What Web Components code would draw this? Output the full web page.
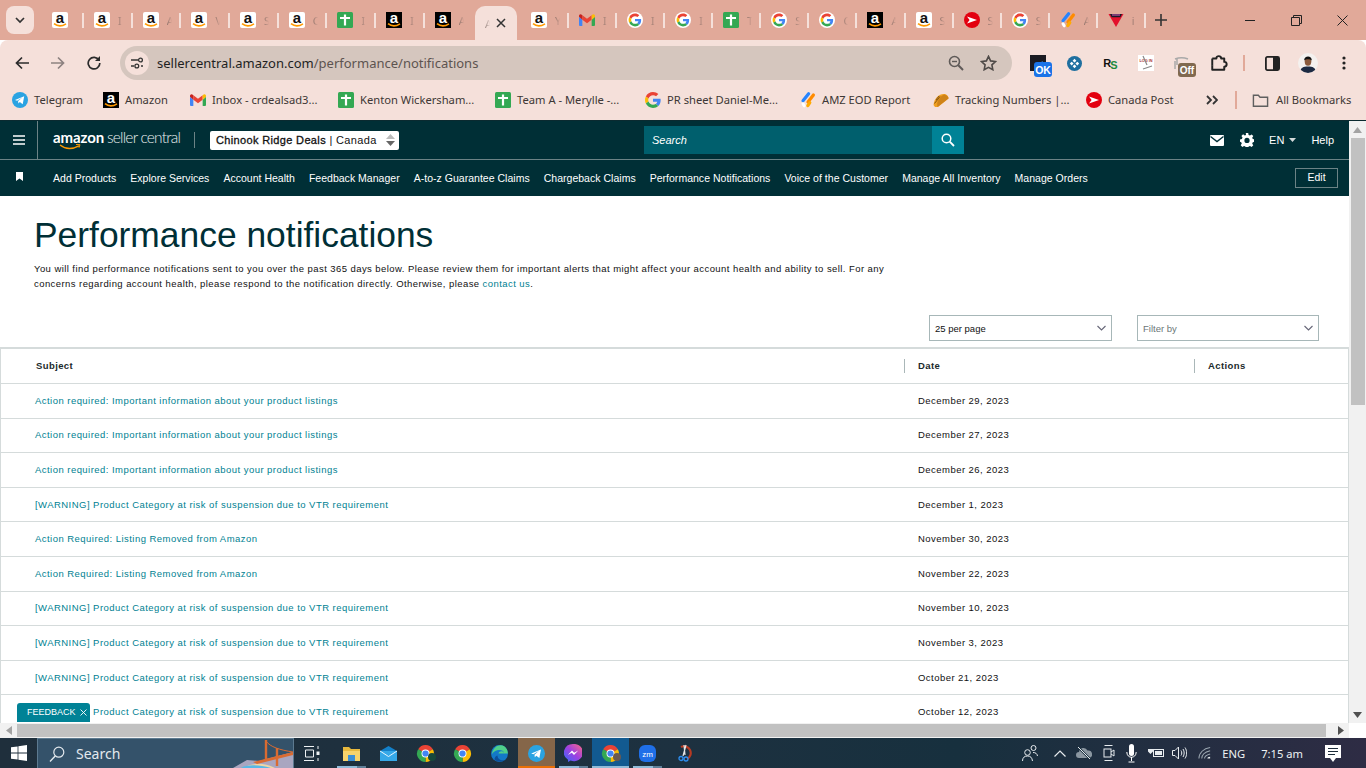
<!DOCTYPE html>
<html>
<head>
<meta charset="utf-8">
<title>Performance notifications</title>
<style>
  html, body { margin: 0; padding: 0; height: 100%; overflow: hidden; }
  body { width: 1366px; height: 768px; display: flex; flex-direction: column; font-family: "Liberation Sans", Arial, sans-serif; }
</style>
</head>
<body>
<chrome-tabs></chrome-tabs>
<chrome-toolbar></chrome-toolbar>
<chrome-bookmarks></chrome-bookmarks>
<seller-window>
  <seller-header></seller-header>
  <seller-nav></seller-nav>
  <perf-page></perf-page>
</seller-window>
<win-taskbar></win-taskbar>

<script>
const chromeSvg = `<svg viewBox="0 0 24 24" width="100%" height="100%"><path fill="#ea4335" d="M12 12L1.6 6A12 12 0 0 1 22.4 6Z"/><path fill="#fbbc05" d="M12 12L22.4 6A12 12 0 0 1 12 24Z"/><path fill="#34a853" d="M12 12L12 24A12 12 0 0 1 1.6 6Z"/><circle cx="12" cy="12" r="5.6" fill="#fff"/><circle cx="12" cy="12" r="4.4" fill="#4285f4"/></svg>`;

const googleG = `<path fill="#EA4335" d="M24 9.5c3.54 0 6.71 1.22 9.21 3.6l6.85-6.85C35.9 2.38 30.47 0 24 0 14.62 0 6.51 5.38 2.56 13.22l7.98 6.19C12.43 13.72 17.74 9.5 24 9.5z"/><path fill="#4285F4" d="M46.98 24.55c0-1.57-.15-3.09-.38-4.55H24v9.02h12.94c-.58 2.96-2.26 5.48-4.78 7.18l7.73 6c4.51-4.18 7.09-10.36 7.09-17.65z"/><path fill="#FBBC05" d="M10.53 28.59c-.48-1.45-.76-2.99-.76-4.59s.27-3.14.76-4.59l-7.98-6.19C.92 16.46 0 20.12 0 24c0 3.88.92 7.54 2.56 10.78l7.97-6.19z"/><path fill="#34A853" d="M24 48c6.48 0 11.93-2.13 15.89-5.81l-7.73-6c-2.15 1.45-4.92 2.3-8.16 2.3-6.26 0-11.57-4.22-13.47-9.91l-7.98 6.19C6.51 42.62 14.62 48 24 48z"/>`;

const icons = {
  amz: `<svg viewBox="0 0 16 16"><rect width="16" height="16" rx="2" fill="#fff"/><text x="8" y="10.6" text-anchor="middle" font-family="Liberation Sans" font-weight="700" font-size="15" fill="#111">a</text><path d="M2 11.6c3.500 2.800 8 2.800 12 .2" fill="none" stroke="#f90" stroke-width="1.6"/></svg>`,
  amzb: `<svg viewBox="0 0 16 16"><rect width="16" height="16" fill="#000"/><text x="8" y="10.6" text-anchor="middle" font-family="Liberation Sans" font-weight="700" font-size="15" fill="#fff">a</text><path d="M2 11.6c3.500 2.800 8 2.800 12 .2" fill="none" stroke="#f90" stroke-width="1.6"/></svg>`,
  sheet: `<svg viewBox="0 0 16 16"><rect width="16" height="16" rx="1.500" fill="#34a853"/><path d="M8 2.500v11M3 6h10" stroke="#fff" stroke-width="2.200"/></svg>`,
  g: `<svg viewBox="0 0 48 48">${googleG}</svg>`,
  gw: `<svg viewBox="-6 -6 60 60"><circle cx="24" cy="24" r="30" fill="#fff"/>${googleG}</svg>`,
  gmail: `<svg viewBox="0 0 24 24"><g transform="translate(0 3)"><path fill="#4285f4" d="M0 4v12.5A1.5 1.5 0 0 0 1.5 18H5V8.5z"/><path fill="#34a853" d="M19 18h3.5a1.5 1.5 0 0 0 1.5-1.5V4l-5 4.5z"/><path fill="#ea4335" d="M5 8.5V2l7 5.2L19 2v6.5l-7 5.2z"/><path fill="#fbbc05" d="M19 2v6.5L24 4V2.5A2.2 2.2 0 0 0 20.5.8z"/><path fill="#c5221f" d="M0 4l5 4.5V2L3.5.8A2.2 2.2 0 0 0 0 2.5z"/></g></svg>`,
  cp: `<svg viewBox="0 0 16 16"><circle cx="8" cy="8" r="8" fill="#e3000f"/><path d="M3 4.600l10 3.400-10 3.400 2.600-3.400z" fill="#fff"/></svg>`,
  jira: `<svg viewBox="0 0 16 16"><path d="M8.600 1.800L3 8.800" stroke="#2684ff" stroke-width="3.200" stroke-linecap="round" fill="none"/><path d="M13.400 3L8 10" stroke="#ff8b00" stroke-width="3.200" stroke-linecap="round" fill="none"/><path d="M9.800 10.600L7.800 13.600" stroke="#ffab00" stroke-width="3.200" stroke-linecap="round" fill="none"/><path d="M3 11.800l1.200 2" stroke="#fff" stroke-width="3" stroke-linecap="round" fill="none"/></svg>`,
  taco: `<svg viewBox="0 0 16 16"><path d="M.5 13C1 6.500 6 2 10.500 2 13.500 2 15.500 4 15.500 6.500L5 15H2z" fill="#f0a020"/><path d="M4.500 15C3 10 6.500 4.500 11.500 2.600 14 3.400 15.500 5 15.500 6.500z" fill="#cf8318"/><path d="M3 8l3-4M1.500 11.500L7 4.500" stroke="#7b4d12" stroke-width=".9"/></svg>`,
  telegram: `<svg viewBox="0 0 16 16"><circle cx="8" cy="8" r="8" fill="#2aa3e2"/><path d="M3 8l9.200-3.800-1.500 8-2.900-2.100-1.400 1.400-.3-2.400 4.300-3.600-5.300 3.300z" fill="#fff"/></svg>`,
  tri: `<svg viewBox="0 0 16 16"><path d="M.5 2h15L8 15z" fill="#e3102c"/><path d="M2 2h12l-1.600 3.200H3.600z" fill="#1a1a2a"/><path d="M4 3h8" stroke="#e060c0" stroke-width="1"/></svg>`,
  folder: `<svg viewBox="0 0 18 16"><path d="M1.500 2.500h5.200l1.800 2h8v9.600h-15z" fill="none" stroke="#5f5f5f" stroke-width="1.500"/></svg>`,
  chrome: chromeSvg
};

class AppIcon extends HTMLElement {
  connectedCallback() {
    const size = this.getAttribute('size') || 16;
    this.attachShadow({ mode: 'open' }).innerHTML = `
      <style>
        :host { display: block; flex: none; width: ${size}px; height: ${size}px; }
        svg { display: block; width: 100%; height: 100%; overflow: visible; }
      </style>${icons[this.getAttribute('name')] || ''}`;
  }
}
customElements.define('app-icon', AppIcon);

// icon name, first letter of the title before it fades out
const tabList = [
  ['amz', ''], ['amz', 'I'], ['amz', 'A'], ['amz', 'V'], ['amz', 'S'], ['amz', 'C'],
  ['sheet', 'I'], ['amzb', 'I'], ['amzb', 'A'], null,
  ['amz', 'Y'], ['gmail', 'I'], ['gw', 'I'], ['gw', 'I'], ['sheet', 'T'], ['gw', 'S'], ['gw', 'C'],
  ['amzb', 'A'], ['amz', 'S'], ['cp', 'S'], ['gw', 'S'], ['jira', 'A'], ['tri', 'i']
];

class ChromeTabs extends HTMLElement {
  connectedCallback() {
    const active = tabList.indexOf(null);
    const tabs = tabList.map((t, i) => {
      if (!t) return `<div class="active"><span class="frag">A</span><svg width="10" height="10" viewBox="0 0 10 10"><path d="M1 1l8 8M9 1l-8 8" stroke="#333" stroke-width="1.500"/></svg></div>`;
      const cls = [i === 0 ? 'first' : '', i > active ? 'after' : '', i + 1 === active ? '' : 'sep'].join(' ');
      return `<div class="tab ${cls}"><app-icon name="${t[0]}"></app-icon><span class="frag">${t[1]}</span></div>`;
    }).join('');
    this.attachShadow({ mode: 'open' }).innerHTML = `
      <style>
        :host { display: flex; flex: none; height: 40px; background: #e1a999; align-items: stretch; font: 12px "Noto Sans", sans-serif; color: #6e5d58; position: relative; }
        .menu { width: 28px; height: 28px; margin: 6px 0 0 6px; border-radius: 8px; background: #f5e0da; display: flex; align-items: center; justify-content: center; flex: none; }
        .strip { display: flex; margin-left: 6px; height: 40px; }
        .tab { width: 48.700px; box-sizing: border-box; padding: 0 0 0 6px; display: flex; align-items: center; gap: 8px; position: relative; flex: none; }
        .tab.first { width: 48px; padding-left: 12px; }
        .tab.after { width: 48.080px; }
        .tab.sep::after { content: ""; position: absolute; right: 4px; top: 13px; height: 15px; width: 2px; background: #f5e0da; }
        .frag { white-space: nowrap; font-size: 11px; -webkit-mask-image: linear-gradient(90deg, rgba(0,0,0,.7) 0, transparent 5px); mask-image: linear-gradient(90deg, rgba(0,0,0,.7) 0, transparent 5px); }
        .active { width: 42px; margin: 6px 8px 0 -2.600px; height: 34px; border-radius: 10px 10px 0 0; background: #f5e0da; display: flex; align-items: center; justify-content: flex-end; gap: 4px; padding-right: 11px; box-sizing: border-box; flex: none; }
        .plus { margin: 0 0 0 5px; flex: none; display: flex; align-items: center; }
        .win { margin-left: auto; display: flex; align-items: center; gap: 35px; padding: 0 18px 0 0; flex: none; }
      </style>
      <div class="menu"><svg width="10" height="8" viewBox="0 0 10 8"><path d="M1 2l4 4 4-4" fill="none" stroke="#333" stroke-width="1.700"/></svg></div>
      <div class="strip">${tabs}</div>
      <div class="plus"><svg width="12" height="12" viewBox="0 0 12 12"><path d="M6 0v12M0 6h12" stroke="#333" stroke-width="1.600"/></svg></div>
      <div class="win">
        <svg width="11" height="11" viewBox="0 0 11 11"><path d="M0 5.500h10" stroke="#222" stroke-width="1"/></svg>
        <svg width="11" height="11" viewBox="0 0 11 11"><path d="M.5 2.500h8v8h-8zM2.500 2.500v-2h8v8h-2" fill="none" stroke="#222"/></svg>
        <svg width="11" height="11" viewBox="0 0 11 11"><path d="M.5.5l10 10M10.500.5l-10 10" stroke="#222"/></svg>
      </div>`;
  }
}
customElements.define('chrome-tabs', ChromeTabs);

class ChromeToolbar extends HTMLElement {
  connectedCallback() {
    this.attachShadow({ mode: 'open' }).innerHTML = `
      <style>
        :host { display: flex; flex: none; height: 46px; background: #f5e0da; align-items: center; padding-left: 15px; box-sizing: border-box; border-radius: 8px 8px 0 0; font: 13px "Noto Sans", sans-serif; }
        .nav { display: flex; gap: 22px; align-items: center; flex: none; width: 105px; }
        svg { display: block; flex: none; }
        .omni { width: 892px; height: 34px; border-radius: 17px; background: #d5c6be; display: flex; align-items: center; box-sizing: border-box; padding-left: 5px; flex: none; }
        .tune { width: 24px; height: 24px; border-radius: 50%; background: #f5e0da; display: flex; align-items: center; justify-content: center; flex: none; }
        .url { margin-left: 8px; color: #5d5450; flex: 1; white-space: nowrap; }
        .url b { font-weight: 400; color: #1f1f1f; }
        .omni-end { display: flex; gap: 16px; padding-right: 15px; align-items: center; }
        .ext { display: flex; align-items: center; margin-left: 17px; flex: 1; height: 46px; }
        .slot { height: 46px; display: flex; justify-content: center; align-items: center; flex: none; position: relative; }
        .pic { position: absolute; }
        .badge { position: absolute; display: flex; align-items: center; justify-content: center; font: 700 10.500px "Liberation Sans", sans-serif; color: #fff; border-radius: 3px; }
        .bar { width: 2px; height: 16px; background: #e1a999; flex: none; }
      </style>
      <div class="nav">
        <svg width="14" height="14" viewBox="0 0 14 14"><path d="M14 7H2M7 1.500L1.500 7 7 12.500" fill="none" stroke="#2b2b2b" stroke-width="1.700"/></svg>
        <svg width="14" height="14" viewBox="0 0 14 14"><path d="M0 7h12M7 1.500L12.500 7 7 12.500" fill="none" stroke="#8d8280" stroke-width="1.700"/></svg>
        <svg width="14" height="14" viewBox="0 0 14 14"><path d="M12 4.200A5.800 5.800 0 1 0 12.800 7" fill="none" stroke="#2b2b2b" stroke-width="1.700"/><path d="M13 0v5H8z" fill="#2b2b2b"/></svg>
      </div>
      <div class="omni">
        <div class="tune"><svg width="14" height="12" viewBox="0 0 14 12"><path d="M1 3h7M1 9h3M11 9h2" stroke="#333" stroke-width="1.400"/><circle cx="10.500" cy="3" r="1.900" fill="none" stroke="#333" stroke-width="1.300"/><circle cx="6.800" cy="9" r="1.900" fill="none" stroke="#333" stroke-width="1.300"/></svg></div>
        <div class="url"><b>sellercentral.amazon.com</b>/performance/notifications</div>
        <div class="omni-end">
          <svg width="16" height="16" viewBox="0 0 16 16"><circle cx="6.500" cy="6.500" r="5" fill="none" stroke="#5f5a58" stroke-width="1.600"/><path d="M10.300 10.300L15 15" stroke="#5f5a58" stroke-width="2"/><path d="M4 6.500h5" stroke="#5f5a58" stroke-width="1.400"/></svg>
          <svg width="17" height="16" viewBox="0 0 17 16"><path d="M8.500 1.400l2.100 4.500 4.900.6-3.600 3.400.9 4.800-4.300-2.400-4.300 2.400.9-4.800L1.500 6.500l4.900-.6z" fill="none" stroke="#4f4a48" stroke-width="1.600"/></svg>
        </div>
      </div>
      <div class="ext">
        <div class="slot" style="width:28px"><svg class="pic" style="left:1px;top:15px" width="16" height="16" viewBox="0 0 16 16"><rect width="16" height="16" fill="#1b1b22"/><path d="M5 15c1-4 4-7 8-8" stroke="#3a7bd5" stroke-width="1.600" fill="none"/></svg><span class="badge" style="background:#1a73e8;left:5px;top:22px;width:18px;height:15px">OK</span></div>
        <div class="slot" style="width:34px"><svg width="15" height="15" viewBox="0 0 16 16"><circle cx="8" cy="8" r="8" fill="#1f6f9f"/><path d="M8 3l2 2-2 2-2-2zM8 9l2 2-2 2-2-2zM3 8l2-2 2 2-2 2zM9 8l2-2 2 2-2 2z" fill="#fff"/></svg></div>
        <div class="slot" style="width:38px;font:700 11px 'Liberation Sans',sans-serif;color:#111;letter-spacing:-1px">R<span style="color:#1d8a3d;margin-top:4px">S</span></div>
        <div class="slot" style="width:34px"><svg width="16" height="16" viewBox="0 0 16 16"><rect width="16" height="16" fill="#fff"/><text x="8" y="6.500" text-anchor="middle" font-size="3.800" font-family="Liberation Sans" font-weight="700" fill="#a33">LOG IN</text><path d="M5 1l4 9M5 14l9-3" stroke="#888" stroke-width="1.200"/></svg></div>
        <div class="slot" style="width:44px"><svg class="pic" style="left:11px;top:17px" width="16" height="14" viewBox="0 0 16 14"><path d="M1 2c4-1.500 9-1.500 13 0M1 4v8M3 2v6" fill="none" stroke="#a9a9a9" stroke-width="1.500"/></svg><span class="badge" style="background:#80694f;left:15px;top:23px;width:18px;height:14px;font-size:10px">Off</span></div>
        <div class="slot" style="width:24px"><svg width="18" height="18" viewBox="0 0 24 24"><path d="M3 6h5.500a3.200 3.200 0 0 1 6.400 0H19v4.500a3.200 3.200 0 0 1 0 6.400V21H3v-5.200" fill="none" stroke="#222" stroke-width="2.600" stroke-linejoin="round"/><path d="M3 6v9.800" stroke="#222" stroke-width="2.600"/></svg></div>
        <div class="bar" style="margin-left:12px"></div>
        <div class="slot" style="width:15px;margin-left:20px"><svg width="15" height="15" viewBox="0 0 15 15"><rect x=".9" y=".9" width="13.200" height="13.200" rx="1.500" fill="none" stroke="#222" stroke-width="1.800"/><rect x="8" y="1" width="6" height="13" fill="#222"/></svg></div>
        <div class="slot" style="width:20px;margin-left:18px"><svg width="20" height="20" viewBox="0 0 20 20"><defs><clipPath id="av"><circle cx="10" cy="10" r="10"/></clipPath></defs><g clip-path="url(#av)"><rect width="20" height="20" fill="#f4f1ef"/><path d="M2 20c0-5.500 3.500-6.500 8-6.500s8 1 8 6.500z" fill="#1c2a42"/><ellipse cx="10" cy="8.500" rx="3.300" ry="4.200" fill="#8a5a3c"/><path d="M6.200 7.500C5.800 2.500 14 2 13.800 7.500 12 5.800 8 5.800 6.200 7.500z" fill="#111"/></g></svg></div>
        <div class="slot" style="width:4px;margin-left:24px"><svg width="4" height="14" viewBox="0 0 4 14"><circle cx="2" cy="2" r="1.600" fill="#222"/><circle cx="2" cy="7" r="1.600" fill="#222"/><circle cx="2" cy="12" r="1.600" fill="#222"/></svg></div>
      </div>`;
  }
}
customElements.define('chrome-toolbar', ChromeToolbar);

const bookmarks = [
  ['telegram', 'Telegram', 91], ['amzb', 'Amazon', 87], ['gmail', 'Inbox - crdealsad3...', 148], ['sheet', 'Kenton Wickersham...', 157],
  ['sheet', 'Team A - Merylle -...', 150], ['g', 'PR sheet Daniel-Me...', 155], ['jira', 'AMZ EOD Report', 133], ['taco', 'Tracking Numbers |...', 153], ['cp', 'Canada Post', 94]
];

class ChromeBookmarks extends HTMLElement {
  connectedCallback() {
    const items = bookmarks.map(b => `<div class="bm" style="width:${b[2]}px"><app-icon name="${b[0]}"></app-icon><span>${b[1]}</span></div>`).join('');
    this.attachShadow({ mode: 'open' }).innerHTML = `
      <style>
        :host { display: flex; flex: none; height: 34px; background: #f5e0da; align-items: center; padding: 0 0 6px 12px; box-sizing: border-box; font: 11.200px "Noto Sans", sans-serif; color: #3d3735; white-space: nowrap; }
        .bm { display: flex; align-items: center; gap: 6px; flex: none; }
        .bm span, .all span { margin-top: -1px; }
        .more { width: 55px; flex: none; padding-left: 26px; box-sizing: border-box; }
        .more svg { display: block; }
        .bar { width: 2px; height: 18px; background: #e1a999; flex: none; margin: 0 15px 0 0; }
        .all { display: flex; align-items: center; gap: 7px; }
      </style>
      ${items}
      <div class="more"><svg width="12" height="10" viewBox="0 0 12 10"><path d="M1 1l4 4-4 4M7 1l4 4-4 4" fill="none" stroke="#333" stroke-width="1.800"/></svg></div>
      <div class="bar"></div>
      <div class="all"><app-icon name="folder" size="17"></app-icon><span>All Bookmarks</span></div>`;
  }
}
customElements.define('chrome-bookmarks', ChromeBookmarks);

class SellerWindow extends HTMLElement {
  connectedCallback() {
    this.attachShadow({ mode: 'open' }).innerHTML = `
      <style>
        :host { display: grid; grid-template-columns: 1fr 17px; grid-template-rows: 1fr 15px; flex: 1; min-height: 0; background: #fff; border-top: 1px solid #0a2a30; position: relative; }
        .view { overflow: hidden; min-width: 0; min-height: 0; display: flex; flex-direction: column; }
        .v { background: #f1f1f1; display: flex; flex-direction: column; align-items: center; }
        .v .arr { height: 17px; flex: none; display: flex; align-items: center; justify-content: center; }
        .v .th { width: 14px; height: 267px; background: #c1c1c1; flex: none; }
        .v .sp { flex: 1; }
        .h { background: #f1f1f1; display: flex; align-items: stretch; }
        .h .arr { width: 17px; flex: none; display: flex; align-items: center; justify-content: center; }
        .h .th { width: 1309px; background: #c1c1c1; margin: 1px 0; flex: none; }
        .h .sp { flex: 1; }
        .corner { background: #fff; }
        .feedback { position: absolute; left: 17px; top: 582px; height: 19px; width: 73px; background: #008296; color: #fff; font: 9px/19px "Liberation Sans", sans-serif; padding-left: 10px; box-sizing: border-box; border-radius: 3px 3px 0 0; white-space: nowrap; display: flex; align-items: center; gap: 4px; }
      </style>
      <div class="view"><slot></slot></div>
      <div class="v">
        <div class="arr"><svg width="9" height="6" viewBox="0 0 9 6"><path d="M4.500 0L9 6H0z" fill="#a3a3a3"/></svg></div>
        <div class="th"></div><div class="sp"></div>
        <div class="arr"><svg width="9" height="6" viewBox="0 0 9 6"><path d="M4.500 6L0 0h9z" fill="#505050"/></svg></div>
      </div>
      <div class="h">
        <div class="arr"><svg width="6" height="9" viewBox="0 0 6 9"><path d="M0 4.500L6 0v9z" fill="#a3a3a3"/></svg></div>
        <div class="th"></div><div class="sp"></div>
        <div class="arr"><svg width="6" height="9" viewBox="0 0 6 9"><path d="M6 4.500L0 9V0z" fill="#505050"/></svg></div>
      </div>
      <div class="corner"></div>
      <div class="feedback">FEEDBACK <svg width="7" height="7" viewBox="0 0 7 7"><path d="M.5.5l6 6M6.500.5l-6 6" stroke="#fff" stroke-width=".9"/></svg></div>`;
  }
}
customElements.define('seller-window', SellerWindow);

class SellerHeader extends HTMLElement {
  connectedCallback() {
    this.attachShadow({ mode: 'open' }).innerHTML = `
      <style>
        :host { display: flex; flex: none; height: 38px; background: #002f36; border-bottom: 1px solid #6c8386; align-items: center; color: #fff; font-size: 11px; position: relative; }
        .burger { width: 37px; height: 38px; border-right: 1px solid #6c8386; display: flex; align-items: center; justify-content: center; flex: none; }
        .logo { margin-left: 15px; width: 128px; flex: none; position: relative; height: 30px; display: flex; align-items: baseline; white-space: nowrap; padding-top: 3px; box-sizing: border-box; }
        .logo b { font: 700 15px Lato, sans-serif; letter-spacing: -.1px; }
        .logo span { font: 300 15.500px Lato, sans-serif; letter-spacing: -.8px; margin-left: 3px; color: #e8eeee; }
        .logo svg { position: absolute; left: 0; top: 19px; }
        .div { width: 1px; height: 16px; background: #6c8386; margin-left: 13px; flex: none; }
        .acct { margin-left: 15px; width: 189px; height: 19px; background: #fff; border-radius: 2px; color: #111; display: flex; align-items: center; padding-left: 6px; box-sizing: border-box; font-size: 11px; white-space: nowrap; flex: none; letter-spacing: .35px; }
        .acct b { font-weight: 400; -webkit-text-stroke: .3px #111; }
        .acct .sp { flex: 1; }
        .acct .st { width: 17px; display: flex; flex-direction: column; align-items: center; gap: 2px; }
        .search { margin-left: 245px; width: 320px; height: 28px; background: #005f6d; display: flex; flex: none; }
        .search i { flex: 1; padding-left: 8px; font-size: 11px; line-height: 28px; color: #fff; }
        .search div { width: 32px; background: #008296; display: flex; align-items: center; justify-content: center; }
        .tools { margin-left: auto; display: flex; align-items: center; padding-right: 15px; }
        .tools span { white-space: nowrap; }
      </style>
      <div class="burger"><svg width="12" height="10" viewBox="0 0 12 10"><path d="M0 1h12M0 5h12M0 9h12" stroke="#fff" stroke-width="1.500"/></svg></div>
      <div class="logo"><b>amazon</b><span>seller central</span>
        <svg width="36" height="8" viewBox="0 0 36 8"><path d="M7 1c5 4 12 4.500 19 .8" fill="none" stroke="#f90" stroke-width="1.400"/><path d="M23 .5l4 .2-1 3" fill="none" stroke="#f90" stroke-width="1"/></svg></div>
      <div class="div"></div>
      <div class="acct"><b>Chinook Ridge Deals</b>&nbsp;|&nbsp;Canada<span class="sp"></span>
        <span class="st"><svg width="9" height="5" viewBox="0 0 9 5"><path d="M4.500 0L9 5H0z" fill="#bbb"/></svg><svg width="9" height="5" viewBox="0 0 9 5"><path d="M4.500 5L0 0h9z" fill="#666"/></svg></span></div>
      <div class="search"><i>Search</i><div><svg width="14" height="14" viewBox="0 0 14 14"><circle cx="5.500" cy="5.500" r="4.300" fill="none" stroke="#fff" stroke-width="1.500"/><path d="M8.700 8.700L13 13" stroke="#fff" stroke-width="1.800"/></svg></div></div>
      <div class="tools">
        <svg width="14" height="11" viewBox="0 0 14 11"><rect width="14" height="11" rx="1" fill="#fff"/><path d="M.5 1.500L7 6.500l6.500-5" fill="none" stroke="#002f36" stroke-width="1.400"/></svg>
        <svg style="margin-left:16px" width="14" height="14" viewBox="0 0 14 14"><path fill="#fff" fill-rule="evenodd" d="M5.800 0h2.400l.4 1.900 1.400.6L11.600 1.400l1.700 1.700-1.100 1.600.6 1.400 1.900.4v2.400l-1.900.4-.6 1.400 1.100 1.600-1.700 1.700-1.600-1.100-1.400.6-.4 1.900H5.800l-.4-1.900-1.400-.6-1.600 1.100L.7 12.200l1.100-1.600-.6-1.400L0 8.800V6.400l1.900-.4.6-1.400L1.400 3 3.100 1.300 4.700 2.400 6 1.900zM7 4.800a2.600 2.600 0 1 0 0 5.200 2.600 2.600 0 0 0 0-5.200z"/></svg>
        <span style="margin-left:15px">EN</span>
        <svg style="margin-left:5px" width="7" height="4" viewBox="0 0 7 4"><path d="M0 0h7L3.500 4z" fill="#d5dbdb"/></svg>
        <span style="margin-left:15px">Help</span>
      </div>`;
  }
}
customElements.define('seller-header', SellerHeader);

class SellerNav extends HTMLElement {
  connectedCallback() {
    const links = ['Add Products', 'Explore Services', 'Account Health', 'Feedback Manager', 'A-to-z Guarantee Claims', 'Chargeback Claims', 'Performance Notifications', 'Voice of the Customer', 'Manage All Inventory', 'Manage Orders'];
    this.attachShadow({ mode: 'open' }).innerHTML = `
      <style>
        :host { display: flex; flex: none; height: 36px; background: #002f36; align-items: center; color: #fff; font-size: 10.500px; padding-left: 16px; padding-right: 11px; box-sizing: border-box; white-space: nowrap; }
        .mark { flex: none; width: 37px; margin-top: -3px; }
        .links { display: flex; gap: 14px; letter-spacing: .02px; }
        .edit { margin-left: auto; width: 43px; height: 20px; box-sizing: border-box; border: 1px solid #6c8386; text-align: center; line-height: 17px; }
      </style>
      <div class="mark"><svg width="7" height="9" viewBox="0 0 7 9" style="display:block"><path d="M0 0h7v9L3.500 6.500 0 9z" fill="#fff"/></svg></div>
      <div class="links">${links.map(l => `<span>${l}</span>`).join('')}</div>
      <div class="edit">Edit</div>`;
  }
}
customElements.define('seller-nav', SellerNav);

class PickBox extends HTMLElement {
  connectedCallback() {
    this.attachShadow({ mode: 'open' }).innerHTML = `
      <style>
        :host { display: flex; flex: none; height: 26px; box-sizing: border-box; border: 1px solid #a7b7b8; align-items: center; padding: 0 5px; font-size: 9.500px; color: #111; background: #fff; }
        :host([ph]) { color: #6c7778; }
        span { flex: 1; }
      </style>
      <span><slot></slot></span>
      <svg width="9" height="6" viewBox="0 0 9 6"><path d="M.5 1l4 4 4-4" fill="none" stroke="#667" stroke-width="1.100"/></svg>`;
  }
}
customElements.define('pick-box', PickBox);

class PerfRow extends HTMLElement {
  connectedCallback() {
    this.attachShadow({ mode: 'open' }).innerHTML = `
      <style>
        :host { display: grid; grid-template-columns: 883px 1fr; height: 34.600px; box-sizing: border-box; border-bottom: 1px solid #d5dbdb; padding-bottom: 1px; align-items: center; font-size: 9.500px; letter-spacing: .46px; padding-left: 34px; }
        a { color: #007f92; text-decoration: none; }
        span { color: #111; }
      </style>
      <a><slot></slot></a>
      <span>${this.getAttribute('date')}</span>`;
  }
}
customElements.define('perf-row', PerfRow);

const rows = [
  ['Action required: Important information about your product listings', 'December 29, 2023'],
  ['Action required: Important information about your product listings', 'December 27, 2023'],
  ['Action required: Important information about your product listings', 'December 26, 2023'],
  ['[WARNING] Product Category at risk of suspension due to VTR requirement', 'December 1, 2023'],
  ['Action Required: Listing Removed from Amazon', 'November 30, 2023'],
  ['Action Required: Listing Removed from Amazon', 'November 22, 2023'],
  ['[WARNING] Product Category at risk of suspension due to VTR requirement', 'November 10, 2023'],
  ['[WARNING] Product Category at risk of suspension due to VTR requirement', 'November 3, 2023'],
  ['[WARNING] Product Category at risk of suspension due to VTR requirement', 'October 21, 2023'],
  ['[WARNING] Product Category at risk of suspension due to VTR requirement', 'October 12, 2023']
];

class PerfPage extends HTMLElement {
  connectedCallback() {
    this.attachShadow({ mode: 'open' }).innerHTML = `
      <style>
        :host { display: block; background: #fff; flex: none; color: #111; }
        h1 { margin: 0; padding: 20px 0 0 34px; font: 400 35.400px/38px "Liberation Sans", sans-serif; color: #002f36; }
        p { margin: 7px 0 0 34px; width: 860px; font-size: 9.500px; line-height: 15px; letter-spacing: .43px; }
        p a { color: #007f92; }
        .tools { display: flex; justify-content: flex-end; gap: 25px; padding-right: 30px; margin-top: 24px; }
        pick-box:first-child { width: 183px; }
        pick-box:last-child { width: 182px; }
        .table { margin-top: 6px; border-top: 2px solid #d5dbdb; border-left: 1px solid #d5dbdb; border-right: 1px solid #d5dbdb; }
        .head { display: grid; grid-template-columns: 903px 290px 1fr; height: 34px; border-bottom: 1px solid #d5dbdb; align-items: center; font-weight: 700; font-size: 9.500px; letter-spacing: .4px; color: #1b2a2c; }
        .head div { box-sizing: border-box; height: 14px; line-height: 14px; padding-left: 13px; border-left: 1px solid #aab7b8; }
        .head div:first-child { border-left: 0; padding-left: 35px; }
      </style>
      <h1>Performance notifications</h1>
      <p>You will find performance notifications sent to you over the past 365 days below. Please review them for important alerts that might affect your account health and ability to sell. For any concerns regarding account health, please respond to the notification directly. Otherwise, please <a>contact us</a>.</p>
      <div class="tools"><pick-box>25 per page</pick-box><pick-box ph>Filter by</pick-box></div>
      <div class="table">
        <div class="head"><div>Subject</div><div>Date</div><div>Actions</div></div>
        ${rows.map(r => `<perf-row date="${r[1]}">${r[0]}</perf-row>`).join('')}
      </div>`;
  }
}
customElements.define('perf-page', PerfPage);

const trayColor = '#e8ecef';
class WinTaskbar extends HTMLElement {
  connectedCallback() {
    this.attachShadow({ mode: 'open' }).innerHTML = `
      <style>
        :host { display: flex; flex: none; height: 30px; align-items: stretch; color: #eef2f4; background: linear-gradient(90deg, #1f2f3c 0%, #1d3140 50%, #17303e 70%, #2e2c44 100%); font: 13px "Noto Sans", sans-serif; }
        .start { width: 37px; display: flex; align-items: center; justify-content: center; flex: none; }
        .search { width: 257px; flex: none; background: #34526a; border: 1px solid #5d7a90; border-bottom: 0; box-sizing: border-box; display: flex; align-items: center; padding-left: 11px; gap: 11px; font-size: 14px; position: relative; overflow: hidden; color: #e3e9ee; }
        .search svg.pic { position: absolute; right: 0; bottom: 0; }
        .apps { display: flex; flex: none; }
        .app { width: 37px; display: flex; align-items: center; justify-content: center; position: relative; flex: none; box-sizing: border-box; }
        .app.view { width: 35px; margin-right: 3.500px; }
        .app.on::after { content: ""; position: absolute; left: 4px; right: 4px; bottom: 0; height: 2px; background: linear-gradient(90deg, #8fbbd8 70%, #5f7f98 70%); }
        .app.tg { background: #856649; }
        .app.tg::after { content: ""; position: absolute; left: 0; right: 0; bottom: 0; height: 2px; background: #ea6f06; }
        .app.cur { background: #125a90; }
        .app.cur::after { left: 0; right: 0; background: #8fbbd8; }
        .mini { position: absolute; width: 8px; height: 8px; border-radius: 50%; left: 21px; top: 15px; }
        .tray { margin-left: auto; display: flex; align-items: center; flex: none; font-size: 11.200px; padding-right: 25px; }
        .tray svg { display: block; flex: none; }
      </style>
      <div class="start"><svg width="16" height="16" viewBox="0 0 16 16"><path d="M0 2.300l6.600-.9v6.200H0zM7.400 1.300L16 0v7.600H7.400zM0 8.400h6.600v6.200L0 13.700zM7.400 8.400H16V16l-8.600-1.300z" fill="#fff"/></svg></div>
      <div class="search">
        <svg width="16" height="16" viewBox="0 0 16 16"><circle cx="9.800" cy="6.200" r="5" fill="none" stroke="#e3e9ee" stroke-width="1.200"/><path d="M6.200 10L1 15.500" stroke="#e3e9ee" stroke-width="1.400"/></svg>
        <span>Search</span>
        <svg class="pic" width="60" height="30" viewBox="0 0 60 30"><path d="M0 30l14-8 12 1 34-9v16z" fill="#a9a6c0"/><path d="M10 30c8-5 20-6 32 0z" fill="#efd6a6"/><path d="M8 30c4-3 16-4 30 0z" fill="#58b8e6"/><path d="M20 24L60 14v3L24 26z" fill="#d96b32"/><path d="M33 2v20M44 10v18" stroke="#d96b32" stroke-width="2.400"/><path d="M33 3c4 6 14 9 27 11" fill="none" stroke="#d96b32"/></svg>
      </div>
      <div class="apps">
        <div class="app view"><svg width="16" height="15" viewBox="0 0 16 15"><path d="M0 .5h10M0 14.500h10M1.500 4h8v7h-8zM14 0v3M14 12v3" fill="none" stroke="#eef2f4" stroke-width="1"/><rect x="12.500" y="5.500" width="3" height="3.500" fill="#eef2f4"/></svg></div>
        <div class="app on"><svg width="17" height="15" viewBox="0 0 17 15"><path d="M0 1h6l2 2h9v12H0z" fill="#e8b93d"/><path d="M0 5h17v10H0z" fill="#f7d36b"/><path d="M5 9h7v6H5z" fill="#3b8fd6"/></svg></div>
        <div class="app"><svg width="17" height="15" viewBox="0 0 17 15"><path d="M0 5L8.500 0 17 5v10H0z" fill="#1380c9"/><path d="M0 5h17v10H0z" fill="#35a8e8"/><path d="M0 5l8.500 5.500L17 5" fill="none" stroke="#e6f5fd" stroke-width="1"/></svg></div>
        <div class="app"><app-icon name="chrome" size="17"></app-icon><span class="mini" style="background:#17483c"></span></div>
        <div class="app"><app-icon name="chrome" size="17"></app-icon></div>
        <div class="app"><svg width="17" height="17" viewBox="0 0 17 17"><circle cx="8.500" cy="8.500" r="8.500" fill="#1379c8"/><path d="M1 9C1.500 3.500 6 0 10 .3c4 .3 7 4 6.800 8.200H7.500c.5-2.500 4.500-3 5.500-.5 0-3.500-8.500-5-12 1z" fill="#4fd08a"/><path d="M3.500 14.500c3 3 8 2.500 10.500.5-4 1-7.500-1-7.500-4.500-2 .5-3 2.300-3 4z" fill="#0c4f9a"/></svg></div>
        <div class="app tg"><svg width="17" height="17" viewBox="0 0 16 16"><circle cx="8" cy="8" r="8" fill="#2aa3e2"/><path d="M3 8l9.200-3.800-1.500 8-2.900-2.100-1.400 1.400-.3-2.400 4.300-3.600-5.300 3.300z" fill="#fff"/></svg></div>
        <div class="app on"><svg width="18" height="18" viewBox="0 0 18 18"><defs><linearGradient id="m" x1="0" y1="1" x2="1" y2="0"><stop offset="0" stop-color="#2f6bff"/><stop offset=".5" stop-color="#a040e0"/><stop offset="1" stop-color="#ff6a80"/></linearGradient></defs><path d="M9 0a9 8.600 0 0 0-5 15.800V18l2.600-1.500A9 8.600 0 1 0 9 0z" fill="url(#m)"/><path d="M3.800 11L8 6.500l2.200 2.200L14.200 6.500 10 11 7.800 8.800z" fill="#fff"/></svg></div>
        <div class="app on cur"><app-icon name="chrome" size="17"></app-icon><span class="mini" style="background:#6b5a50"></span></div>
        <div class="app on"><svg width="17" height="17" viewBox="0 0 17 17"><rect width="17" height="17" rx="6" fill="#1f6fe8"/><text x="8.500" y="11.500" text-anchor="middle" font-family="Liberation Sans" font-size="8" fill="#fff">zm</text></svg></div>
        <div class="app"><svg width="15" height="18" viewBox="0 0 15 18"><path d="M4 3a6.500 6.500 0 1 1 6 12" fill="none" stroke="#b83a22" stroke-width="2.200"/><path d="M7 1l1 10M9 1L6 12" stroke="#e8e8e8" stroke-width="1.200"/><circle cx="4" cy="14.500" r="2" fill="none" stroke="#2d8ef0" stroke-width="1.300"/><circle cx="9" cy="15" r="2" fill="none" stroke="#2d8ef0" stroke-width="1.300"/></svg></div>
      </div>
      <div class="tray">
        <svg width="16" height="18" viewBox="0 0 16 18"><circle cx="5.500" cy="8.500" r="2.800" fill="none" stroke="${trayColor}"/><path d="M.5 17c0-3.500 2-5 5-5s4.500 1.500 5 5" fill="none" stroke="${trayColor}"/><circle cx="11.500" cy="4" r="2.500" fill="none" stroke="${trayColor}"/><path d="M11 8.500c2.500 0 4 1 4.500 3.500" fill="none" stroke="${trayColor}"/></svg>
        <svg style="margin-left:16px" width="12" height="7" viewBox="0 0 12 7"><path d="M.5 6.500L6 1l5.500 5.500" fill="none" stroke="${trayColor}" stroke-width="1.200"/></svg>
        <svg style="margin-left:10px" width="16" height="14" viewBox="0 0 16 14"><path d="M3 12a3 3 0 0 1 0-6 4.500 4.500 0 0 1 8.500-1.500A3.800 3.800 0 0 1 13 12z" fill="#8b97a1"/><path d="M2 1l12 12" stroke="#1d3341" stroke-width="2.200"/><path d="M2 1l12 12" stroke="${trayColor}"/></svg>
        <svg style="margin-left:11px" width="12" height="18" viewBox="0 0 12 18"><path d="M1.500 1.500h8M1.500 16.500h8" stroke="${trayColor}"/><rect x="1" y="5" width="7" height="8" fill="none" stroke="${trayColor}"/><path d="M8 8l3-2v6l-3-2" fill="none" stroke="${trayColor}"/></svg>
        <svg style="margin-left:11px" width="11" height="19" viewBox="0 0 11 19"><rect x="3" y="0" width="5" height="12" rx="2.500" fill="#fff"/><path d="M.8 8c0 7 9.400 7 9.400 0M5.500 13v4M2.500 18h6" fill="none" stroke="#fff" stroke-width="1"/></svg>
        <svg style="margin-left:11px" width="16" height="14" viewBox="0 0 16 14"><path d="M1 3V0M4 3V0M0 3h5v2.500L2.500 8 0 5.500z" fill="${trayColor}"/><rect x="5.500" y="3.500" width="10" height="7" fill="none" stroke="${trayColor}"/><rect x="7" y="5" width="7" height="4" fill="${trayColor}"/></svg>
        <svg style="margin-left:8px" width="15" height="14" viewBox="0 0 15 14"><path d="M.5 4.500h2.500L6.500 1v12L3 9.500H.5z" fill="none" stroke="${trayColor}"/><path d="M9 4.500c1 1.500 1 3.500 0 5M11 3c1.600 2.400 1.600 5.600 0 8M13 1.500c2.200 3.300 2.200 7.700 0 11" fill="none" stroke="${trayColor}"/></svg>
        <svg style="margin-left:11px" width="14" height="14" viewBox="0 0 15 14"><path d="M1 13C1 7 6 2 13 1M4 13c0-4 3-7 9-8.500M7 13c0-2.500 2-4 6-5" fill="none" stroke="#9aa6b0" stroke-width="1.100"/><path d="M10 13c0-1 1-2 3-2v2z" fill="${trayColor}"/></svg>
        <span style="margin-left:10px">ENG</span>
        <span style="margin-left:16px">7:15 am</span>
        <svg style="margin-left:22px" width="16" height="17" viewBox="0 0 16 17"><path d="M0 0h16v13h-5l-3 4-3-4H0z" fill="#fff"/><path d="M3 3.500h10M3 6.500h10M3 9.500h7" stroke="#1d2c3a" stroke-width="1"/></svg>
      </div>`;
  }
}
customElements.define('win-taskbar', WinTaskbar);
</script>
</body>
</html>
